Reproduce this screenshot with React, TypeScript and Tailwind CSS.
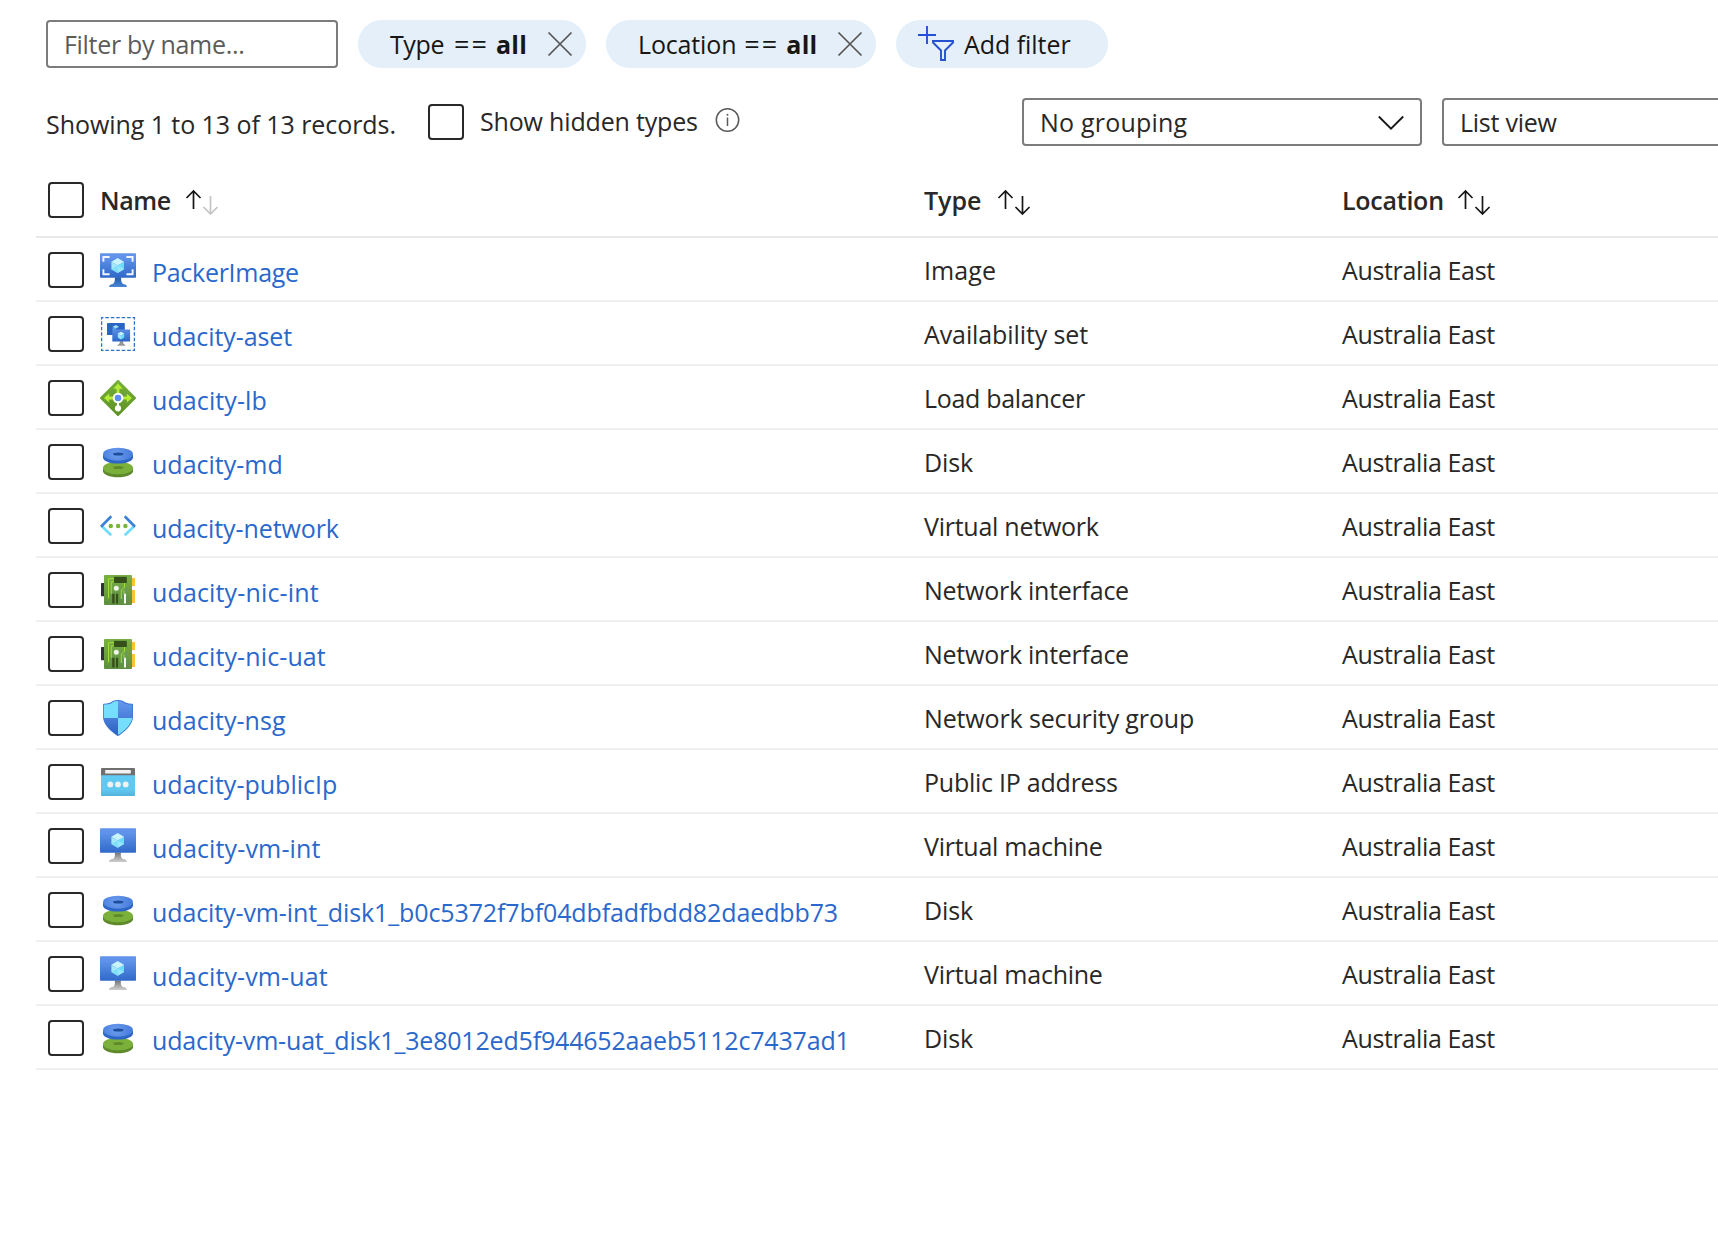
import type { ReactNode } from "react";

function ImageIcon() {
  return (
    <svg width="36" height="36" viewBox="0 0 36 36">
      <defs>
        <linearGradient id="img-screen" x1="0" y1="25" x2="0" y2="1" gradientUnits="userSpaceOnUse">
          <stop stopColor="#2f69c8" />
          <stop offset="0.82" stopColor="#6193ea" />
        </linearGradient>
        <linearGradient id="img-stand" x1="0" y1="35" x2="0" y2="25" gradientUnits="userSpaceOnUse">
          <stop stopColor="#4a86d6" />
          <stop offset="1" stopColor="#205aa8" />
        </linearGradient>
      </defs>
      <path d="M24.300 32.200c-3-.5-3.200-2.900-3.200-6.900h-6.200c0 4-.2 6.400-3.200 6.900A2.900 2.900 0 0 0 9 34.900h18a2.900 2.900 0 0 0-2.700-2.700z" fill="url(#img-stand)" />
      <rect x="0" y="1.300" width="36" height="24.500" rx="0.800" fill="url(#img-screen)" />
      <path d="M3.400 9.800V5h6.200M26.400 5h6.200v4.800M32.600 17.300v4.900h-6.200M9.600 22.200H3.400v-4.900" fill="none" stroke="#f2f6fc" strokeWidth="1.900" />
      <Cube />
    </svg>
  );
}

function Cube() {
  return (
    <g>
      <path d="M24 9.800v7.400l-6.300 3.700v-7.400z" fill="#6fdcfa" />
      <path d="M24 9.800l-6.300 3.700-6.300-3.700 6.300-3.700z" fill="#c9f4fd" />
      <path d="M17.700 13.500v7.400l-6.300-3.700V9.800z" fill="#a4e9fb" />
      <path d="M11.400 17.200l6.300-3.700v7.400z" fill="#7fe0fa" />
      <path d="M24 17.200l-6.300-3.700v7.400z" fill="#98e6fb" />
    </g>
  );
}

function VmIcon() {
  return (
    <svg width="36" height="36" viewBox="0 0 36 36">
      <defs>
        <linearGradient id="vm-screen" x1="0" y1="25" x2="0" y2="0" gradientUnits="userSpaceOnUse">
          <stop stopColor="#2f69c8" />
          <stop offset="0.82" stopColor="#6193ea" />
        </linearGradient>
        <linearGradient id="vm-stand" x1="0" y1="34" x2="0" y2="24" gradientUnits="userSpaceOnUse">
          <stop offset="0.1" stopColor="#c8c8c8" />
          <stop offset="1" stopColor="#707070" />
        </linearGradient>
      </defs>
      <path d="M24 31.200c-3-.5-3.200-2.700-3.200-6.700h-5.900c0 4-.1 6.200-3.100 6.700A2.900 2.900 0 0 0 9 34h17.800A2.900 2.900 0 0 0 24 31.200z" fill="url(#vm-stand)" />
      <rect x="0" y="0.200" width="36" height="24.600" rx="0.800" fill="url(#vm-screen)" />
      <g transform="translate(0 -1.100)">
        <Cube />
      </g>
    </svg>
  );
}

function AvailabilityIcon() {
  return (
    <svg width="36" height="36" viewBox="0 0 36 36">
      <defs>
        <linearGradient id="as-screen" x1="0" y1="25" x2="0" y2="13" gradientUnits="userSpaceOnUse">
          <stop stopColor="#2f69c8" />
          <stop offset="1" stopColor="#5a8de6" />
        </linearGradient>
      </defs>
      <rect x="1.600" y="1.600" width="32.800" height="32.800" fill="none" stroke="#2f6fcf" strokeWidth="1.300" strokeDasharray="3.600 1.865" strokeDashoffset="1.800" />
      <rect x="7" y="7" width="17.800" height="12" rx="0.500" fill="#2a64c4" />
      <path d="M15.800 8.900l3.200 1.900-3.200 1.900-3.200-1.900z" fill="#9cdcf5" />
      <path d="M12.600 10.800l3.200 1.900v3.700l-3.200-1.900z" fill="#4fa7dd" />
      <path d="M19.900 25h3.200c0 2.100.2 3.300 2.300 3.900v.8h-8v-.8c2.200-.6 2.500-1.800 2.500-3.900z" fill="#979797" />
      <rect x="12.300" y="13.600" width="17.800" height="12" rx="0.500" fill="url(#as-screen)" />
      <path d="M24.200 17.600v3.900L21 23.400v-3.900z" fill="#6fdcfa" />
      <path d="M24.200 17.600L21 19.500l-3.200-1.900 3.200-1.900z" fill="#c9f4fd" />
      <path d="M21 19.500v3.900l-3.200-1.900v-3.900z" fill="#96e4fa" />
    </svg>
  );
}

function LoadBalancerIcon() {
  return (
    <svg width="36" height="36" viewBox="0 0 36 36">
      <defs>
        <linearGradient id="lb-bg" x1="0" y1="36" x2="0" y2="0" gradientUnits="userSpaceOnUse">
          <stop stopColor="#5e9123" />
          <stop offset="1" stopColor="#76b03a" />
        </linearGradient>
      </defs>
      <path d="M17.300.3a1 1 0 0 1 1.400 0l17 17a1 1 0 0 1 0 1.400l-17 17a1 1 0 0 1-1.400 0l-17-17a1 1 0 0 1 0-1.400z" fill="url(#lb-bg)" />
      <path d="M18 3.600l4.700 5.200h-3.300v5h-2.800v-5h-3.300zM4 18l5.200-4.600v3.200h5v2.800h-5v3.200zM32 18l-5.200-4.600v3.200h-5v2.800h5v3.200z" fill="#b4ec36" />
      <rect x="17" y="21" width="2" height="7" fill="#fff" />
      <circle cx="18" cy="18" r="4.300" fill="#5d90e6" stroke="#fff" strokeWidth="2" />
      <circle cx="18" cy="28.300" r="3.100" fill="#fff" />
    </svg>
  );
}

function DiskIcon() {
  return (
    <svg width="36" height="36" viewBox="0 0 36 36">
      <defs>
        <radialGradient id="disk-top" cx="16" cy="10" r="14" gradientUnits="userSpaceOnUse">
          <stop offset="0.2" stopColor="#6496ea" />
          <stop offset="1" stopColor="#4a80dc" />
        </radialGradient>
      </defs>
      <path d="M3 24v3.200C3 30.500 9.700 33.200 18 33.200s15-2.700 15-6V24z" fill="#5f8a2c" />
      <ellipse cx="18" cy="24" rx="15" ry="6.300" fill="#7bb03a" />
      <ellipse cx="18.300" cy="23.600" rx="5.200" ry="1.500" fill="#5f8a2c" />
      <path d="M3 10v3.400C3 16.800 9.700 19.600 18 19.600s15-2.800 15-6.200V10z" fill="#2d66c6" />
      <ellipse cx="18" cy="10.200" rx="15" ry="6.500" fill="url(#disk-top)" />
      <ellipse cx="18.300" cy="9.900" rx="5.200" ry="1.500" fill="#1f4f9c" />
    </svg>
  );
}

function NetworkIcon() {
  return (
    <svg width="36" height="36" viewBox="0 0 36 36">
      <g fill="none" strokeWidth="2.700">
        <path d="M11.300 27.200L1.600 18" stroke="#72dcfb" />
        <path d="M24.700 27.200L34.400 18" stroke="#72dcfb" />
        <path d="M1 18.700L11.300 8.300" stroke="#3b82d6" />
        <path d="M35 18.700L24.700 8.300" stroke="#3b82d6" />
      </g>
      <circle cx="10.800" cy="18" r="2.200" fill="#79b436" />
      <circle cx="18.100" cy="18" r="2.200" fill="#79b436" />
      <circle cx="25.400" cy="18" r="2.200" fill="#79b436" />
    </svg>
  );
}

function NicIcon() {
  return (
    <svg width="36" height="36" viewBox="0 0 36 36">
      <defs>
        <linearGradient id="nic-board" x1="0" y1="33" x2="0" y2="3" gradientUnits="userSpaceOnUse">
          <stop stopColor="#5d8f40" />
          <stop offset="1" stopColor="#79b045" />
        </linearGradient>
      </defs>
      <rect x="1" y="11" width="4" height="13.200" rx="0.500" fill="#2f3338" />
      <rect x="31" y="6" width="4" height="8.200" rx="0.500" fill="#fbc434" />
      <rect x="31" y="18" width="4" height="13" rx="0.500" fill="#fbc434" />
      <rect x="4" y="3" width="28" height="30" rx="1" fill="url(#nic-board)" />
      <path d="M14 6.700H8.500v19.600M14 9.800h-2.800v12M21.300 27V18l3.200-2.500v-4.500M24 18.500v3" fill="none" stroke="#a6dc38" strokeWidth="1" />
      <rect x="14" y="4.800" width="12.800" height="6.200" fill="#355018" />
      <circle cx="16.300" cy="16.200" r="2.500" fill="#f0f2ec" />
      <rect x="12.200" y="21.700" width="2.400" height="9.800" fill="#355018" />
      <rect x="16" y="21.700" width="2.100" height="9.800" fill="#355018" />
      <rect x="24" y="21.700" width="2" height="9.800" fill="#f4f4f4" />
    </svg>
  );
}

function ShieldIcon() {
  return (
    <svg width="36" height="36" viewBox="0 0 36 36">
      <defs>
        <linearGradient id="nsg-a" x1="0" y1="36" x2="0" y2="0" gradientUnits="userSpaceOnUse">
          <stop stopColor="#2860c0" />
          <stop offset="1" stopColor="#6a9af0" />
        </linearGradient>
        <clipPath id="nsg-clip">
          <path d="M32.200 16.600c0 9.300-11.300 16.800-13.700 18.200a1 1 0 0 1-1 0C15.100 33.400 3.800 25.900 3.800 16.600V5.500a.9.9 0 0 1 .9-.9C13.500 4.400 11.500.9 18 .9s4.500 3.500 13.300 3.700a.9.9 0 0 1 .9.900z" />
        </clipPath>
      </defs>
      <path d="M33 16.400c0 9.800-11.900 17.700-14.400 19.300a1 1 0 0 1-1.100 0C14.900 34.100 3 26.200 3 16.400V4.700a.9.900 0 0 1 .9-.9C13.100 3.500 11 0 18 0s4.900 3.500 14.100 3.800a.9.900 0 0 1 .9.900z" fill="#3a74d0" />
      <g clipPath="url(#nsg-clip)">
        <rect width="36" height="36" fill="url(#nsg-a)" />
        <rect width="18" height="18" fill="#74defc" />
        <rect x="18" y="18" width="18" height="18" fill="#74defc" />
      </g>
    </svg>
  );
}

function PublicIpIcon() {
  return (
    <svg width="36" height="36" viewBox="0 0 36 36">
      <defs>
        <linearGradient id="ip-body" x1="0" y1="32" x2="0" y2="11" gradientUnits="userSpaceOnUse">
          <stop stopColor="#54b2dc" />
          <stop offset="0.3" stopColor="#5fc8f0" />
          <stop offset="1" stopColor="#5fcaf2" />
        </linearGradient>
      </defs>
      <path d="M1 10h34v20.900a1 1 0 0 1-1 1H2a1 1 0 0 1-1-1z" fill="url(#ip-body)" />
      <path d="M2 4h32a1 1 0 0 1 1 1v6.200H1V5a1 1 0 0 1 1-1z" fill="#6f6f6f" />
      <rect x="5.200" y="6.100" width="25.600" height="3.500" rx="0.300" fill="#f2f2f2" />
      <circle cx="10.300" cy="20.400" r="2.900" fill="#f2f2f2" />
      <circle cx="18" cy="20.400" r="2.900" fill="#f2f2f2" />
      <circle cx="25.700" cy="20.400" r="2.900" fill="#f2f2f2" />
    </svg>
  );
}

function SortIcon({ down = "#161616" }: { down?: string }) {
  return (
    <svg width="34" height="26" viewBox="0 0 34 26" fill="none" strokeWidth="1.700">
      <path d="M8.500 20V2.500M1.500 9l7-7 7 7" stroke="#161616" />
      <path d="M25.500 7v17.500M18.500 18l7 7 7-7" stroke={down} />
    </svg>
  );
}

function Checkbox() {
  return <div className="h-9 w-9 shrink-0 rounded-[4px] border-2 border-[#292827] bg-white" />;
}

function Pill({ label, tracking, width }: { label: string; tracking: string; width: string }) {
  return (
    <div className={`flex h-12 items-center rounded-full bg-[#e4eff9] pl-8 text-[#161616] ${width}`}>
      <span className={tracking}>{label}</span>
      <span className="mr-[7px] text-[27px] leading-[34px] tracking-[2px]">==</span>
      <span className="font-bold tracking-[0.3px]">all</span>
      <svg className="mr-[13px] ml-auto" width="26" height="26" viewBox="0 0 26 26" fill="none" stroke="#555" strokeWidth="1.700">
        <path d="M1.500 1.500l23 23M24.500 1.500l-23 23" />
      </svg>
    </div>
  );
}

type Row = { icon: ReactNode; name: string; nameTrack: string; type: string; typeTrack: string };

const rows: Row[] = [
  { icon: <ImageIcon />, name: "PackerImage", nameTrack: "tracking-[-0.28px]", type: "Image", typeTrack: "tracking-[0.1px]" },
  { icon: <AvailabilityIcon />, name: "udacity-aset", nameTrack: "tracking-[-0.08px]", type: "Availability set", typeTrack: "tracking-[-0.1px]" },
  { icon: <LoadBalancerIcon />, name: "udacity-lb", nameTrack: "tracking-[0.1px]", type: "Load balancer", typeTrack: "tracking-[-0.3px]" },
  { icon: <DiskIcon />, name: "udacity-md", nameTrack: "tracking-[0px]", type: "Disk", typeTrack: "tracking-[-0.1px]" },
  { icon: <NetworkIcon />, name: "udacity-network", nameTrack: "tracking-[-0.1px]", type: "Virtual network", typeTrack: "tracking-[-0.25px]" },
  { icon: <NicIcon />, name: "udacity-nic-int", nameTrack: "tracking-[0.15px]", type: "Network interface", typeTrack: "tracking-[-0.25px]" },
  { icon: <NicIcon />, name: "udacity-nic-uat", nameTrack: "tracking-[0.12px]", type: "Network interface", typeTrack: "tracking-[-0.25px]" },
  { icon: <ShieldIcon />, name: "udacity-nsg", nameTrack: "tracking-[0.04px]", type: "Network security group", typeTrack: "tracking-[-0.14px]" },
  { icon: <PublicIpIcon />, name: "udacity-publicIp", nameTrack: "tracking-[0.02px]", type: "Public IP address", typeTrack: "tracking-[-0.24px]" },
  { icon: <VmIcon />, name: "udacity-vm-int", nameTrack: "tracking-[0.15px]", type: "Virtual machine", typeTrack: "tracking-[-0.25px]" },
  { icon: <DiskIcon />, name: "udacity-vm-int_disk1_b0c5372f7bf04dbfadfbdd82daedbb73", nameTrack: "tracking-[-0.11px]", type: "Disk", typeTrack: "tracking-[-0.1px]" },
  { icon: <VmIcon />, name: "udacity-vm-uat", nameTrack: "tracking-[0.12px]", type: "Virtual machine", typeTrack: "tracking-[-0.25px]" },
  { icon: <DiskIcon />, name: "udacity-vm-uat_disk1_3e8012ed5f944652aaeb5112c7437ad1", nameTrack: "tracking-[-0.18px]", type: "Disk", typeTrack: "tracking-[-0.1px]" },
];

export default function App() {
  return (
    <div className="h-[1244px] w-[1718px] overflow-hidden bg-white pt-5 font-['Open_Sans','Noto_Sans',sans-serif] text-[25px] leading-[34px] whitespace-nowrap text-[#292827]">
      <div className="flex h-12 gap-5 pl-[46px]">
        <div className="flex w-[292px] items-center rounded-[4px] border-2 border-[#7d7c7b] pl-4 tracking-[-0.3px] text-[#5c5b5a]">
          Filter by name...
        </div>
        <Pill label="Type" tracking="mr-[10px] tracking-[-0.4px]" width="w-[228px]" />
        <Pill label="Location" tracking="mr-[8px] tracking-[-0.15px]" width="w-[270px]" />
        <div className="flex w-[212px] items-center rounded-full bg-[#e4eff9] pl-[22px] text-[#161616]">
          <svg className="mr-2.5" width="36" height="36" viewBox="0 0 36 36" fill="none" stroke="#2450d2" strokeWidth="1.900">
            <path d="M9 0v18M0 9h18" />
            <path d="M15 15h20v1.500l-8 8v9.500h-4v-9.500l-8-8z" />
          </svg>
          <span className="tracking-[-0.05px]">Add filter</span>
        </div>
      </div>

      <div className="mt-[30px] flex h-12 items-start pl-[46px]">
        <span className="mt-[9px] w-[382px] shrink-0 tracking-[-0.06px]">Showing 1 to 13 of 13 records.</span>
        <div className="mt-1.5 flex w-[594px] shrink-0">
          <Checkbox />
          <span className="ml-4 tracking-[-0.17px]">Show hidden types</span>
          <svg className="mt-1 ml-[17px]" width="25" height="25" viewBox="0 0 25 25">
            <circle cx="12.500" cy="12" r="11.200" fill="none" stroke="#5a5958" strokeWidth="1.500" />
            <path d="M12.500 9.500v8.500" stroke="#5a5958" strokeWidth="1.500" />
            <circle cx="12.500" cy="6.800" r="1" fill="#5a5958" />
          </svg>
        </div>
        <div className="mr-5 flex h-12 w-[400px] shrink-0 items-center justify-between rounded-[4px] border-2 border-[#7d7c7b] pr-4 pl-4">
          <span className="tracking-[0.2px]">No grouping</span>
          <svg className="mt-0.5" width="26" height="16" viewBox="0 0 26 16" fill="none" stroke="#161616" strokeWidth="1.800">
            <path d="M.8 1.500L13 13.700 25.200 1.500" />
          </svg>
        </div>
        <div className="flex h-12 w-[400px] shrink-0 items-center rounded-[4px] border-2 border-[#7d7c7b] pl-4 tracking-[-0.25px]">
          List view
        </div>
      </div>

      <div className="mt-4 ml-9">
        <div className="flex h-[76px] items-start border-b-2 border-[#e8e8e8] pt-[21px] font-semibold">
          <div className="flex w-[888px] shrink-0 pl-3">
            <div className="-mt-px">
              <Checkbox />
            </div>
            <span className="mr-[14px] ml-4 tracking-[-0.4px]">Name</span>
            <div className="mt-[6px]">
              <SortIcon down="#c4c4c4" />
            </div>
          </div>
          <div className="flex w-[417px] shrink-0">
            <span className="mr-[16px]">Type</span>
            <div className="mt-[6px]">
              <SortIcon />
            </div>
          </div>
          <div className="flex">
            <span className="mr-[13px] ml-px tracking-[-0.25px]">Location</span>
            <div className="mt-[6px]">
              <SortIcon />
            </div>
          </div>
        </div>
        {rows.map((r) => (
          <div key={r.name} className="flex h-16 items-start border-b-2 border-[#efefef] pt-3.5">
            <div className="flex w-[888px] shrink-0 pl-3">
              <Checkbox />
              <div className="ml-4 h-9 w-9 shrink-0">{r.icon}</div>
              <a className={`mt-[3px] ml-4 text-[#2a68cb] ${r.nameTrack}`}>{r.name}</a>
            </div>
            <span className={`mt-px w-[417px] shrink-0 ${r.typeTrack}`}>{r.type}</span>
            <span className="mt-px ml-px tracking-[-0.35px]">Australia East</span>
          </div>
        ))}
      </div>
    </div>
  );
}
